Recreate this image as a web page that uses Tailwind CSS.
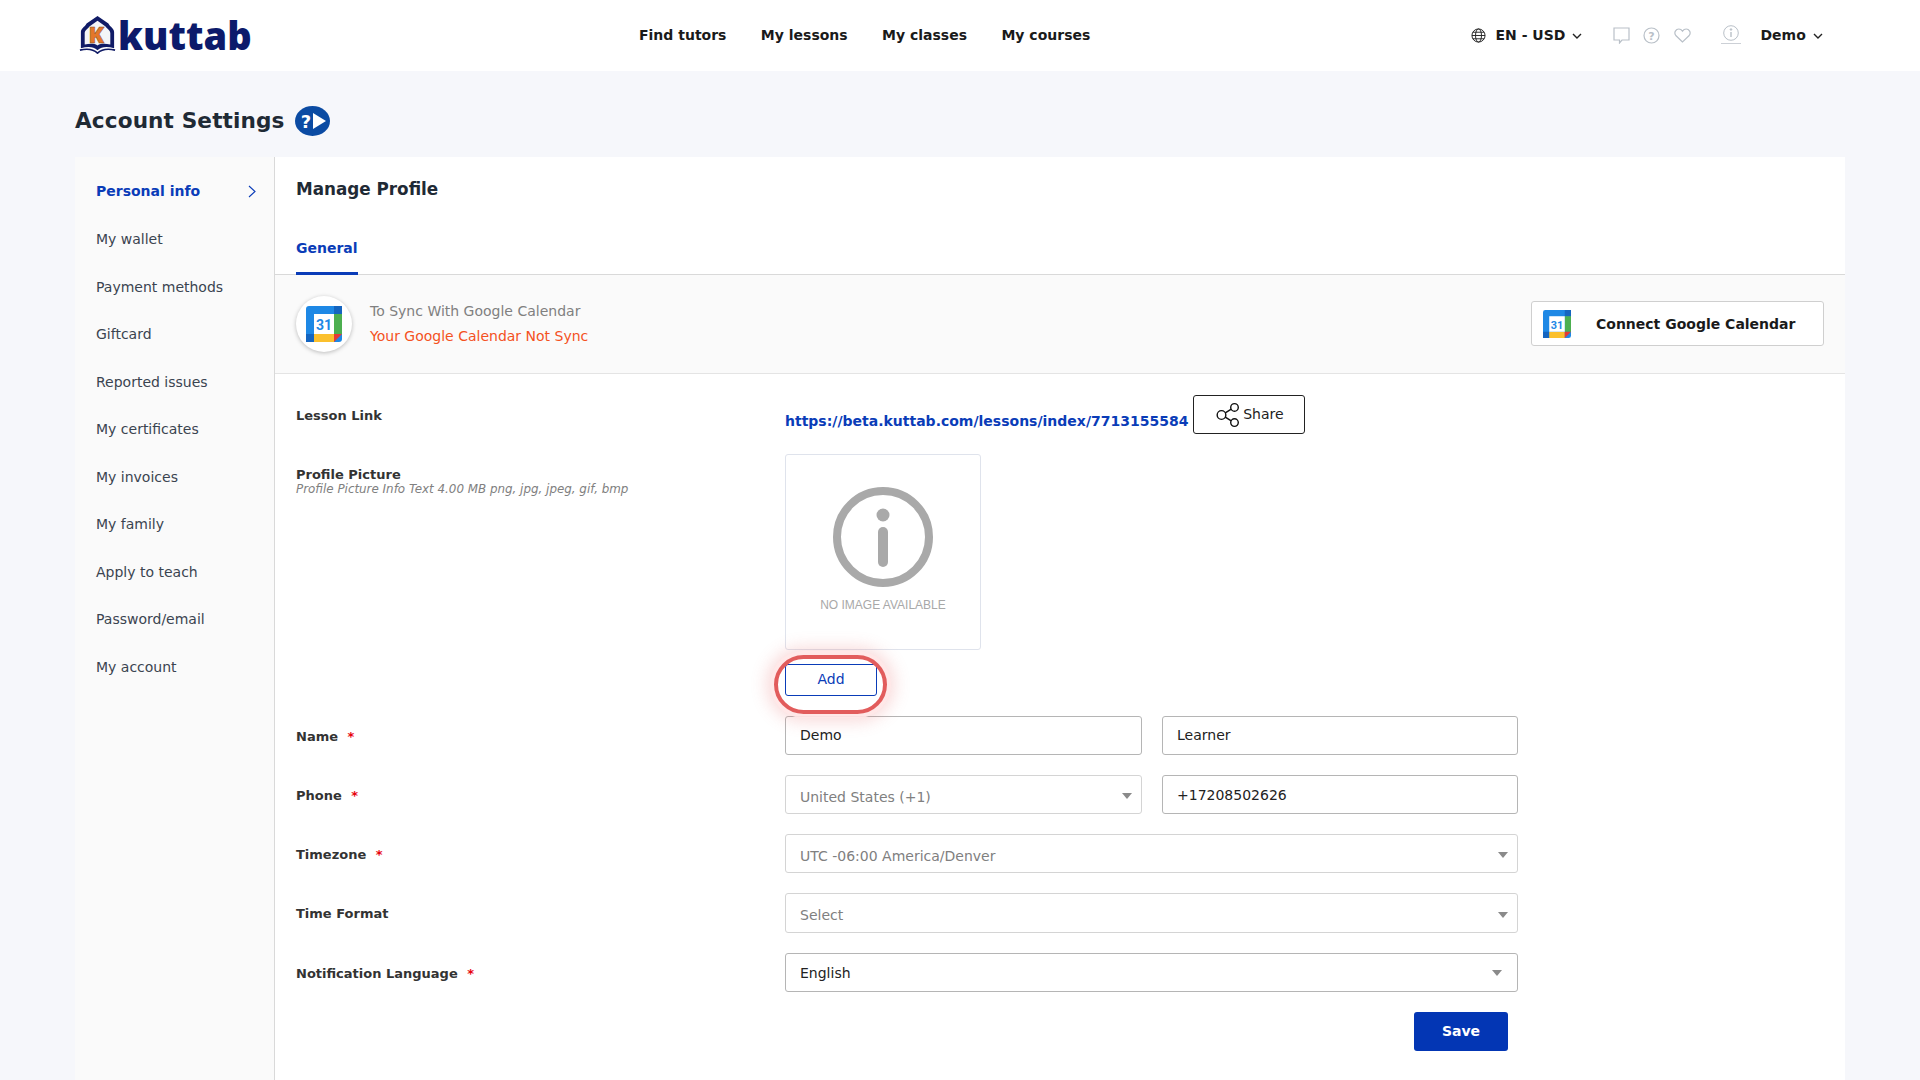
<!DOCTYPE html>
<html lang="en">
<head>
    <meta charset="UTF-8">
    <meta name="viewport" content="width=device-width, initial-scale=1.0">
    <title>Kuttab - Account Settings</title>
    <script src="https://cdn.jsdelivr.net/npm/@tailwindcss/browser@4"></script>
</head>
<body class="bg-[#f6f7fb] h-[1080px] overflow-hidden font-['DejaVu_Sans',sans-serif] text-[14px] text-[#1f2a35]">
    <!-- header -->
    <header class="bg-white h-[71px] flex items-center relative">
        <div class="ml-[79px] w-[180px] flex items-center h-[50px]">
            <svg width="37" height="38" viewBox="0 0 39 40" class="shrink-0 -mt-[2px]">
                <path d="M2 34V17C2 13 6 12 8 8L19.500 0L31 8C33 12 37 13 37 17V34C30 32 24 32 19.500 36C15 32 9 32 2 34Z" fill="#101b66"/>
                <path d="M6 30V18C6 15 9 14 11 11L19.500 5L28 11C30 14 33 15 33 18V30C27 29 23 29 19.500 31C16 29 12 29 6 30Z" fill="#f4f5f8"/>
                <text x="10" y="28" font-family="'Open Sans'" font-weight="800" font-size="24" fill="#e4772a" stroke="#7d4a22" stroke-width="0.500">K</text>
                <path d="M1 36C9 34 15 35 19.500 39C24 35 30 34 38 36" fill="none" stroke="#101b66" stroke-width="1.800"/>
            </svg>
            <span class="ml-[2px] font-['Open_Sans'] font-extrabold text-[38px] leading-none text-[#0c1a6b] -mt-[2px]">kuttab</span>
        </div>
        <nav class="absolute left-[639px] top-0 h-[71px] flex items-center gap-[34.400px] font-bold text-[#1a1a1a]">
            <a>Find tutors</a>
            <a>My lessons</a>
            <a>My classes</a>
            <a>My courses</a>
        </nav>
        <div class="absolute left-[1471px] top-0 h-[71px] flex items-center font-bold text-[#1a1a1a]">
            <svg width="15" height="15" viewBox="0 0 16 16" fill="none" stroke="#222" stroke-width="1"><circle cx="8" cy="8" r="7"/><ellipse cx="8" cy="8" rx="3.200" ry="7"/><path d="M1 8H15M2 4.500H14M2 11.500H14"/></svg>
            <span class="ml-[9.500px]">EN - USD</span>
            <svg class="ml-[7px]" width="10" height="10" viewBox="0 0 10 10" fill="none" stroke="#222" stroke-width="1.400"><path d="M1 3L5 7L9 3"/></svg>
            <svg class="ml-[31px]" width="17" height="17" viewBox="0 0 17 17" fill="none" stroke="#b9c0c8" stroke-width="1.200"><path d="M1 1H16V13H9L6.500 16V13H1Z"/></svg>
            <svg class="ml-[13px]" width="17" height="17" viewBox="0 0 17 17" fill="none" stroke="#b9c0c8" stroke-width="1.200"><circle cx="8.500" cy="8.500" r="7.500"/><text x="8.500" y="12.500" text-anchor="middle" font-size="11" font-weight="700" fill="#b9c0c8" stroke="none" font-family="'DejaVu Sans'">?</text></svg>
            <svg class="ml-[14px]" width="17" height="15" viewBox="0 0 17 15" fill="none" stroke="#b9c0c8" stroke-width="1.200"><path d="M8.500 14L1.800 7.500C-0.500 4.500 2 1 4.800 1C6.400 1 7.700 2 8.500 3.200C9.300 2 10.600 1 12.200 1C15 1 17.500 4.500 15.200 7.500Z"/></svg>
            <div class="ml-[30px] w-[20px] flex flex-col items-center -mt-[3px]">
                <svg width="16" height="16" viewBox="0 0 16 16" fill="none" stroke="#b9c0c8" stroke-width="1"><circle cx="8" cy="8" r="7.300"/><circle cx="8" cy="4.500" r="0.800" fill="#b9c0c8"/><path d="M8 7V12" stroke-width="1.400"/></svg>
                <div class="w-[20px] h-px bg-[#ccd0d6] mt-[2px]"></div>
            </div>
            <span class="ml-[19px]">Demo</span>
            <svg class="ml-[7px]" width="10" height="10" viewBox="0 0 10 10" fill="none" stroke="#222" stroke-width="1.400"><path d="M1 3L5 7L9 3"/></svg>
        </div>
    </header>

    <main class="px-[75px]">
        <div class="h-[86px] flex items-center pt-[14px]">
            <h1 class="font-bold text-[21.600px] tracking-[0.12px] text-[#1f2a35]">Account Settings</h1>
            <svg class="ml-[10px]" width="35" height="30" viewBox="0 0 35 30">
                <ellipse cx="17.500" cy="15" rx="17.500" ry="15" fill="#0b4ba3"/>
                <text x="11" y="22" text-anchor="middle" font-family="'DejaVu Sans'" font-weight="700" font-size="18" fill="#fff">?</text>
                <path d="M18 7L31 15L18 23Z" fill="#fff"/>
            </svg>
        </div>

        <div class="flex bg-white h-[923px]">
            <!-- side menu -->
            <aside class="w-[200px] shrink-0 bg-[#fafafa] border-r border-[#d9d9d9] pl-[21px] pt-[10px] text-[#3a4450]">
                <div class="h-[49px] flex items-center justify-between pr-[18px] font-bold text-[#0a3cb8]">
                    <span>Personal info</span>
                    <svg width="8" height="13" viewBox="0 0 8 13" fill="none" stroke="#0a3cb8" stroke-width="1.100"><path d="M1 1L7 6.500L1 12"/></svg>
                </div>
                <div class="h-[47.500px] flex items-center">My wallet</div>
                <div class="h-[47.500px] flex items-center">Payment methods</div>
                <div class="h-[47.500px] flex items-center">Giftcard</div>
                <div class="h-[47.500px] flex items-center">Reported issues</div>
                <div class="h-[47.500px] flex items-center">My certificates</div>
                <div class="h-[47.500px] flex items-center">My invoices</div>
                <div class="h-[47.500px] flex items-center">My family</div>
                <div class="h-[47.500px] flex items-center">Apply to teach</div>
                <div class="h-[47.500px] flex items-center">Password/email</div>
                <div class="h-[47.500px] flex items-center">My account</div>
            </aside>

            <section class="flex-1 min-w-0">
                <div class="px-[21px] h-[118px] border-b border-[#d9d9d9] flex flex-col">
                    <h2 class="font-bold text-[16.800px] mt-[21px] leading-[22px]">Manage Profile</h2>
                    <div class="mt-auto w-[62px] h-[35px] border-b-[3px] border-[#0a3cb8] font-bold text-[#0a3cb8] leading-[17px] -mb-px">General</div>
                </div>

                <!-- google calendar -->
                <div class="h-[99px] bg-[#fafafa] border-b border-[#e4e4e4] px-[21px] flex items-center">
                    <div class="w-[56px] h-[56px] rounded-full bg-white shadow-[0_1px_4px_rgba(0,0,0,0.25)] flex items-center justify-center">
                        <svg width="36" height="36" viewBox="0 0 36 36">
                            <rect width="36" height="36" rx="3" fill="#1e88e5"/>
                            <rect x="28" y="0" width="8" height="8" fill="#1565c0"/>
                            <rect x="28" y="8" width="8" height="20" fill="#4caf50"/>
                            <rect x="0" y="28" width="8" height="8" fill="#1565c0"/>
                            <rect x="8" y="28" width="20" height="8" fill="#fbc02d"/>
                            <path d="M28 28H36L28 36Z" fill="#e53935"/>
                            <rect x="8" y="8" width="20" height="20" fill="#fff"/>
                            <text x="18" y="24" text-anchor="middle" font-family="'Roboto'" font-weight="700" font-size="14" fill="#1e88e5">31</text>
                        </svg>
                    </div>
                    <div class="ml-[18px]">
                        <p class="text-[#808080] leading-[25px]">To Sync With Google Calendar</p>
                        <p class="text-[#f4511e] leading-[25px]">Your Google Calendar Not Sync</p>
                    </div>
                    <button class="ml-auto -mt-[1px] w-[293px] h-[45px] pt-[1px] bg-white border border-[#cfcfcf] rounded-[3px] flex items-center pl-[11px] font-bold text-[#1a1a1a]">
                        <svg width="28" height="28" viewBox="0 0 36 36">
                            <rect width="36" height="36" rx="3" fill="#1e88e5"/>
                            <rect x="28" y="0" width="8" height="8" fill="#1565c0"/>
                            <rect x="28" y="8" width="8" height="20" fill="#4caf50"/>
                            <rect x="0" y="28" width="8" height="8" fill="#1565c0"/>
                            <rect x="8" y="28" width="20" height="8" fill="#fbc02d"/>
                            <path d="M28 28H36L28 36Z" fill="#e53935"/>
                            <rect x="8" y="8" width="20" height="20" fill="#fff"/>
                            <text x="18" y="24" text-anchor="middle" font-family="'Roboto'" font-weight="700" font-size="14" fill="#1e88e5">31</text>
                        </svg>
                        <span class="ml-[25px]">Connect Google Calendar</span>
                    </button>
                </div>

                <!-- form -->
                <div class="pl-[21px] pt-[21px]">
                    <div class="flex h-[38px]">
                        <label class="w-[489px] font-bold text-[13px] text-[#333] pt-[12px] leading-[18px]">Lesson Link</label>
                        <div class="flex items-start">
                            <a class="font-bold text-[#0a3cb8] mt-[16px] leading-[20px] mr-[5px]">https://beta.kuttab.com/lessons/index/7713155584</a>
                            <button class="w-[112px] h-[39px] border border-[#222] rounded-[3px] flex items-center justify-center gap-[2px] text-[#222]">
                                <svg width="26" height="26" viewBox="0 0 24 24" fill="none" stroke="#111" stroke-width="1.300"><circle cx="6" cy="12" r="4"/><circle cx="18" cy="5" r="3.500"/><circle cx="18" cy="19" r="3.500"/><path d="M9.500 10L15 6.500M9.500 14L15 17.500"/></svg>
                                Share
                            </button>
                        </div>
                    </div>

                    <div class="flex mt-[21px]">
                        <div class="w-[489px] pt-[14px]">
                            <label class="block font-bold text-[13px] text-[#333] leading-[14px]">Profile Picture</label>
                            <p class="italic text-[11.900px] text-[#808080] leading-[14px]">Profile Picture Info Text 4.00 MB png, jpg, jpeg, gif, bmp</p>
                        </div>
                        <div>
                            <div class="w-[196px] h-[196px] border border-[#dfe3ec] rounded-[3px] flex flex-col items-center pt-[32px]">
                                <svg width="100" height="100" viewBox="0 0 100 100" fill="none">
                                    <circle cx="50" cy="50" r="46" stroke="#a9a9a9" stroke-width="8"/>
                                    <circle cx="50" cy="28" r="6.500" fill="#a9a9a9"/>
                                    <rect x="45" y="40" width="10" height="40" rx="5" fill="#a9a9a9"/>
                                </svg>
                                <span class="font-['Liberation_Sans'] text-[12px] text-[#a8a8a8] mt-[11px] leading-[14px]">NO IMAGE AVAILABLE</span>
                            </div>
                            <div class="relative mt-[14px] w-[92px]">
                                <button class="w-[92px] h-[32px] pb-[2px] border border-[#0a3cb8] rounded-[3px] text-[#0a3cb8]">Add</button>
                                <div class="absolute -left-[11px] -top-[9px] w-[113px] h-[59px] rounded-[30px] border-[4px] border-[#e25c5c] shadow-[0_0_0_4px_rgba(255,232,232,0.9),0_0_16px_8px_rgba(228,92,92,0.22)]"></div>
                            </div>
                        </div>
                    </div>

                    <div class="flex items-center mt-[20px] h-[39px]">
                        <label class="w-[489px] pt-[2px] font-bold text-[13px] text-[#333]">Name <span class="text-red-600 ml-[5px]">*</span></label>
                        <div class="w-[357px] h-[39px] border border-[#b5b5b5] rounded-[3px] px-[14px] flex items-center text-[#222]">Demo</div>
                        <div class="ml-[20px] w-[356px] h-[39px] border border-[#b5b5b5] rounded-[3px] px-[14px] flex items-center text-[#222]">Learner</div>
                    </div>

                    <div class="flex items-center mt-[20px] h-[39px]">
                        <label class="w-[489px] pt-[2px] font-bold text-[13px] text-[#333]">Phone <span class="text-red-600 ml-[5px]">*</span></label>
                        <div class="w-[357px] h-[39px] border border-[#d4d4d4] rounded-[3px] pl-[14px] pr-[9px] flex items-center justify-between text-[#808080]">
                            <span class="mt-[6px]">United States (+1)</span>
                            <span class="w-0 h-0 mt-[3px] border-x-[5px] border-x-transparent border-t-[6px] border-t-[#8a8a8a]"></span>
                        </div>
                        <div class="ml-[20px] w-[356px] h-[39px] border border-[#b5b5b5] rounded-[3px] px-[14px] pt-[1px] flex items-center text-[#222]">+17208502626</div>
                    </div>

                    <div class="flex items-center mt-[20px] h-[39px]">
                        <label class="w-[489px] pt-[2px] font-bold text-[13px] text-[#333]">Timezone <span class="text-red-600 ml-[5px]">*</span></label>
                        <div class="w-[733px] h-[39px] border border-[#d4d4d4] rounded-[3px] pl-[14px] pr-[9px] flex items-center justify-between text-[#808080]">
                            <span class="mt-[6px]">UTC -06:00 America/Denver</span>
                            <span class="w-0 h-0 mt-[3px] border-x-[5px] border-x-transparent border-t-[6px] border-t-[#8a8a8a]"></span>
                        </div>
                    </div>

                    <div class="flex items-center mt-[20px] h-[40px]">
                        <label class="w-[489px] pt-[2px] font-bold text-[13px] text-[#333]">Time Format</label>
                        <div class="w-[733px] h-[40px] border border-[#d4d4d4] rounded-[3px] pl-[14px] pr-[9px] flex items-center justify-between text-[#808080]">
                            <span class="mt-[4px]">Select</span>
                            <span class="w-0 h-0 mt-[3px] border-x-[5px] border-x-transparent border-t-[6px] border-t-[#8a8a8a]"></span>
                        </div>
                    </div>

                    <div class="flex items-center mt-[20px] h-[39px]">
                        <label class="w-[489px] pt-[2px] font-bold text-[13px] text-[#333]">Notification Language <span class="text-red-600 ml-[5px]">*</span></label>
                        <div class="w-[733px] h-[39px] border border-[#b5b5b5] rounded-[3px] pl-[14px] pr-[15px] flex items-center justify-between text-[#222]">
                            <span class="mt-[1px]">English</span>
                            <span class="w-0 h-0 border-x-[5px] border-x-transparent border-t-[6px] border-t-[#8a8a8a]"></span>
                        </div>
                    </div>

                    <div class="w-[1212px] flex justify-end mt-[20px]">
                        <button class="w-[94px] h-[39px] bg-[#0336b4] rounded-[3px] text-white font-bold">Save</button>
                    </div>
                </div>
            </section>
        </div>
    </main>
</body>
</html>
